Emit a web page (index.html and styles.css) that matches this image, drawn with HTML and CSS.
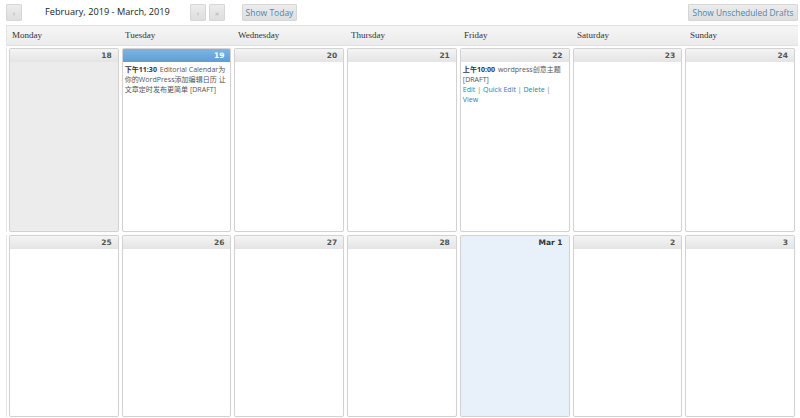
FILE: index.html
```html
<!DOCTYPE html>
<html>
<head>
<meta charset="utf-8">
<link rel="stylesheet" href="styles.css">
</head>
<body>
<div class="cal">
  <div class="toolbar">
    <div class="nav">
      <button class="btn arrow">‹</button>
      <span class="title">February, 2019 - March, 2019</span>
      <button class="btn arrow">›</button>
      <button class="btn arrow">»</button>
      <button class="btn text show-today">Show Today</button>
    </div>
    <button class="btn text drafts">Show Unscheduled Drafts</button>
  </div>
  <div class="days">
    <div>Monday</div><div>Tuesday</div><div>Wednesday</div><div>Thursday</div><div>Friday</div><div>Saturday</div><div>Sunday</div>
  </div>
  <div class="week w1">
    <div class="cell past"><div class="num">18</div><div class="body"></div></div>
    <div class="cell today"><div class="num">19</div><div class="body">
      <div class="post"><b class="time">下午11:30</b> Editorial Calendar为你的WordPress添加编辑日历 让文章定时发布更简单 [DRAFT]</div>
    </div></div>
    <div class="cell"><div class="num">20</div><div class="body"></div></div>
    <div class="cell"><div class="num">21</div><div class="body"></div></div>
    <div class="cell"><div class="num">22</div><div class="body">
      <div class="post"><b class="time">上午10:00</b> wordpress创意主题 [DRAFT]</div>
      <div class="links"><a>Edit</a> | <a>Quick Edit</a> | <a>Delete</a> |<br><a>View</a></div>
    </div></div>
    <div class="cell"><div class="num">23</div><div class="body"></div></div>
    <div class="cell"><div class="num">24</div><div class="body"></div></div>
  </div>
  <div class="week w2">
    <div class="cell"><div class="num">25</div><div class="body"></div></div>
    <div class="cell"><div class="num">26</div><div class="body"></div></div>
    <div class="cell"><div class="num">27</div><div class="body"></div></div>
    <div class="cell"><div class="num">28</div><div class="body"></div></div>
    <div class="cell first"><div class="num">Mar 1</div><div class="body"></div></div>
    <div class="cell"><div class="num">2</div><div class="body"></div></div>
    <div class="cell"><div class="num">3</div><div class="body"></div></div>
  </div>
</div>
</body>
</html>
```
FILE: styles.css
```css
html, body { margin: 0; padding: 0; background: #fff; }
body { font-family: "Open Sans", "Noto Sans CJK SC", sans-serif; color: #333; }
.cal { width: 792px; margin-left: 6px; height: 418px; display: flex; flex-direction: column; }
.toolbar { display: flex; justify-content: space-between; align-items: flex-start; padding-top: 4px; height: 17px; }
.nav { display: flex; align-items: flex-start; }
.btn { font-family: "Open Sans", sans-serif; background: linear-gradient(#ececec, #dedede); border: 1px solid #d6d6d6; border-radius: 1px; height: 17px; padding: 0; margin: 0; box-sizing: border-box; cursor: pointer; }
.arrow { width: 16px; font-size: 8px; color: #aaa; line-height: 14px; }
.arrow + .arrow { margin-left: 3px; }
.text { font-size: 8.5px; color: #4a87b3; padding: 0 4px; line-height: 15px; }
.show-today { margin-left: 17px; width: 55px; padding: 0; }
.drafts { font-size: 8.4px; width: 110px; padding: 0; }
.title { font-size: 9.2px; color: #222; width: 168px; padding-left: 23px; box-sizing: border-box; line-height: 16px; white-space: nowrap; }
.days { margin-top: 4px; height: 21px; display: grid; grid-template-columns: repeat(7, minmax(0, 1fr)); background: linear-gradient(#f6f6f6, #ebebeb); border-top: 1px solid #e2e2e2; border-bottom: 1px solid #e0e0e0; box-sizing: border-box; border-left: 1px solid #e4e4e4; }
.days div { font-family: "Liberation Serif", serif; font-size: 9px; color: #333; padding-left: 5px; line-height: 19px; }
.week { display: grid; grid-template-columns: repeat(7, minmax(0, 1fr)); gap: 3px; padding: 0 3px 0 2px; border-left: 1px solid #e4e4e4; }
.w1 { margin-top: 2px; height: 184px; }
.w2 { margin-top: 3px; height: 182px; }
.cell { border: 1px solid #d2d2d2; border-radius: 2px; background: #fff; display: flex; flex-direction: column; overflow: hidden; box-shadow: 0 0 1px rgba(0,0,0,0.08); min-width: 0; }
.num { height: 13px; background: linear-gradient(#f4f4f4, #e4e4e4); text-align: right; font-family: "DejaVu Sans", sans-serif; font-weight: bold; font-size: 7.5px; line-height: 13px; color: #555; padding-right: 6px; flex: none; }
.body { flex: 1; padding: 2px 0 2px 2px; font-size: 7.05px; line-height: 10px; color: #555; }
.past .body { background: #ececec; }
.today .num { background: linear-gradient(#7fb4e2, #5f9ed6); color: #fff; }
.first .num { background: #e8f0fa; color: #333; }
.first .body { background: #e8f0fa; }
.time { color: #333; font-size: inherit; margin-right: 1px; }
.links a { color: #2f7bb0; }
.links { color: #777; }
```
